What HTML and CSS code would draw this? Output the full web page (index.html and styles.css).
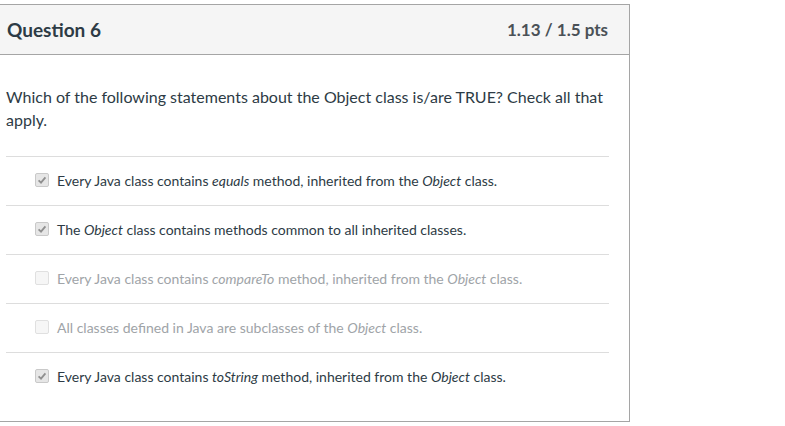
FILE: index.html
```html
<!DOCTYPE html>
<html>
<head>
<meta charset="utf-8">
<link rel="stylesheet" href="styles.css">
</head>
<body>
<div class="card">
  <div class="header">
    <span class="title">Question 6</span>
    <span class="pts">1.13 / 1.5 pts</span>
  </div>
  <div class="body">
    <p class="question">Which of the following statements about the Object class is/are TRUE? Check all that apply.</p>
    <div class="answers">
      <div class="row">
        <span class="box checked"><svg viewBox="0 0 12 12" width="12" height="12"><path d="M2.6 6.4 L5 8.6 L9.4 3.4" fill="none" stroke="#8f8f8f" stroke-width="1.8"/></svg></span>
        <span class="label">Every Java class contains <em>equals</em> method, inherited from the <em>Object</em> class.</span>
      </div>
      <div class="row">
        <span class="box checked"><svg viewBox="0 0 12 12" width="12" height="12"><path d="M2.6 6.4 L5 8.6 L9.4 3.4" fill="none" stroke="#8f8f8f" stroke-width="1.8"/></svg></span>
        <span class="label">The <em>Object</em> class contains methods common to all inherited classes.</span>
      </div>
      <div class="row dim">
        <span class="box"></span>
        <span class="label">Every Java class contains <em>compareTo</em> method, inherited from the <em>Object</em> class.</span>
      </div>
      <div class="row dim">
        <span class="box"></span>
        <span class="label">All classes defined in Java are subclasses of the <em>Object</em> class.</span>
      </div>
      <div class="row">
        <span class="box checked"><svg viewBox="0 0 12 12" width="12" height="12"><path d="M2.6 6.4 L5 8.6 L9.4 3.4" fill="none" stroke="#8f8f8f" stroke-width="1.8"/></svg></span>
        <span class="label">Every Java class contains <em>toString</em> method, inherited from the <em>Object</em> class.</span>
      </div>
    </div>
  </div>
</div>
</body>
</html>
```
FILE: styles.css
```css
html, body { margin: 0; padding: 0; background: #fff; }
body { padding-top: 4px; font-family: Lato, "Open Sans", sans-serif; color: #2d3b45; }
.card {
  width: 631px;
  margin-left: -1px;
  border: 1px solid #a5a5a5;
  box-sizing: border-box;
  height: 418px;
}
.header {
  height: 49px;
  background: #f5f5f5;
  border-bottom: 1px solid #a5a5a5;
  display: flex;
  align-items: center;
  justify-content: space-between;
  padding: 0 21px 0 7px;
}
.title { font-size: 19px; font-weight: 700; }
.pts { font-size: 17px; font-weight: 700; color: #4a5157; }
.body { padding: 30px 20px 0 6px; }
.question { margin: 0; font-size: 16px; line-height: 23px; }
.answers { margin-top: 25px; }
.row {
  border-top: 1px solid #dddddd;
  height: 49px;
  display: flex;
  align-items: center;
  padding-left: 29px;
  padding-bottom: 2px;
  box-sizing: border-box;
  font-size: 14px;
}
.row.dim .label { color: #a0a4a8; }
.box {
  width: 12px; height: 12px;
  border: 1px solid #e0e0e0;
  border-radius: 2px;
  background: #f6f6f6;
  margin-right: 8px;
  display: flex; align-items: center; justify-content: center;
}
.box.checked { background: #e6e6e6; border-color: #c9c9c9; }
.box svg { display: block; }
em { font-style: italic; }
```
